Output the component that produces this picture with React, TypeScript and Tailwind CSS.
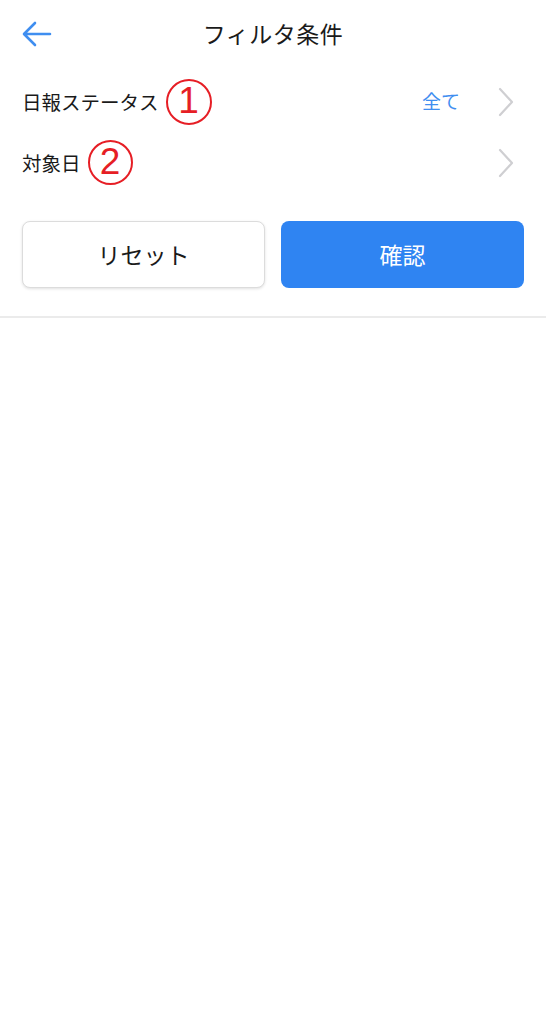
import React from 'react';

const Circled = ({ n, className }: { n: string; className?: string }) => (
  <span
    className={
      'inline-flex items-center justify-center rounded-full border-2 border-[#e61e25] text-[#e61e25] ' +
      (className ?? '')
    }
  >
    <span className="text-[37px] font-light leading-none font-['Liberation_Sans',sans-serif] -mt-[2px]">{n}</span>
  </span>
);

const Chevron = () => (
  <svg width="16" height="30" viewBox="0 0 16 30" fill="none">
    <polyline points="2,2 14,15 2,28" stroke="#cfcfd2" strokeWidth="2.2" strokeLinecap="round" strokeLinejoin="round" />
  </svg>
);

export default function App() {
  return (
    <div className="w-[546px] min-h-[1024px] bg-white text-[#1a1a1a] font-['Noto_Sans_CJK_JP','Noto_Sans',sans-serif]">
      {/* Header */}
      <div className="relative h-[68px] flex items-center justify-center">
        <button className="absolute left-[22px] top-[21px] w-[30px] h-[26px] flex items-center">
          <svg width="30" height="26" viewBox="0 0 30 26" fill="none">
            <path d="M28 13H3M13 2L2 13l11 11" stroke="#3f8ef0" strokeWidth="2.6" strokeLinecap="round" strokeLinejoin="round" />
          </svg>
        </button>
        <h1 className="text-[23px] tracking-[0.5px] -mt-[1px]">フィルタ条件</h1>
      </div>

      {/* Rows */}
      <div className="px-[22px] pt-[3px]">
        <div className="h-[61px] flex items-center">
          <span className="text-[19.5px]">日報ステータス</span>
          <Circled n="1" className="w-[46px] h-[46px] ml-[7px]" />
          <span className="ml-auto text-[19px] text-[#3f8ef0]">全て</span>
          <span className="ml-[38px] mr-[10px] flex items-center">
            <Chevron />
          </span>
        </div>
        <div className="h-[61px] flex items-center">
          <span className="text-[19.5px]">対象日</span>
          <Circled n="2" className="w-[45px] h-[45px] ml-[7px]" />
          <span className="ml-auto mr-[10px] flex items-center">
            <Chevron />
          </span>
        </div>

        {/* Buttons */}
        <div className="mt-[28px] pb-[28px] grid grid-cols-2 gap-[16px]">
          <button className="h-[67px] rounded-[8px] border border-[#dcdcdc] bg-white shadow-[0_1px_3px_rgba(0,0,0,0.12)] text-[23px] text-[#1a1a1a]">
            リセット
          </button>
          <button className="h-[67px] rounded-[8px] bg-[#2f84f2] text-[23px] text-white">
            確認
          </button>
        </div>
      </div>
      <div className="h-[2px] bg-[#ebebeb]" />
    </div>
  );
}
